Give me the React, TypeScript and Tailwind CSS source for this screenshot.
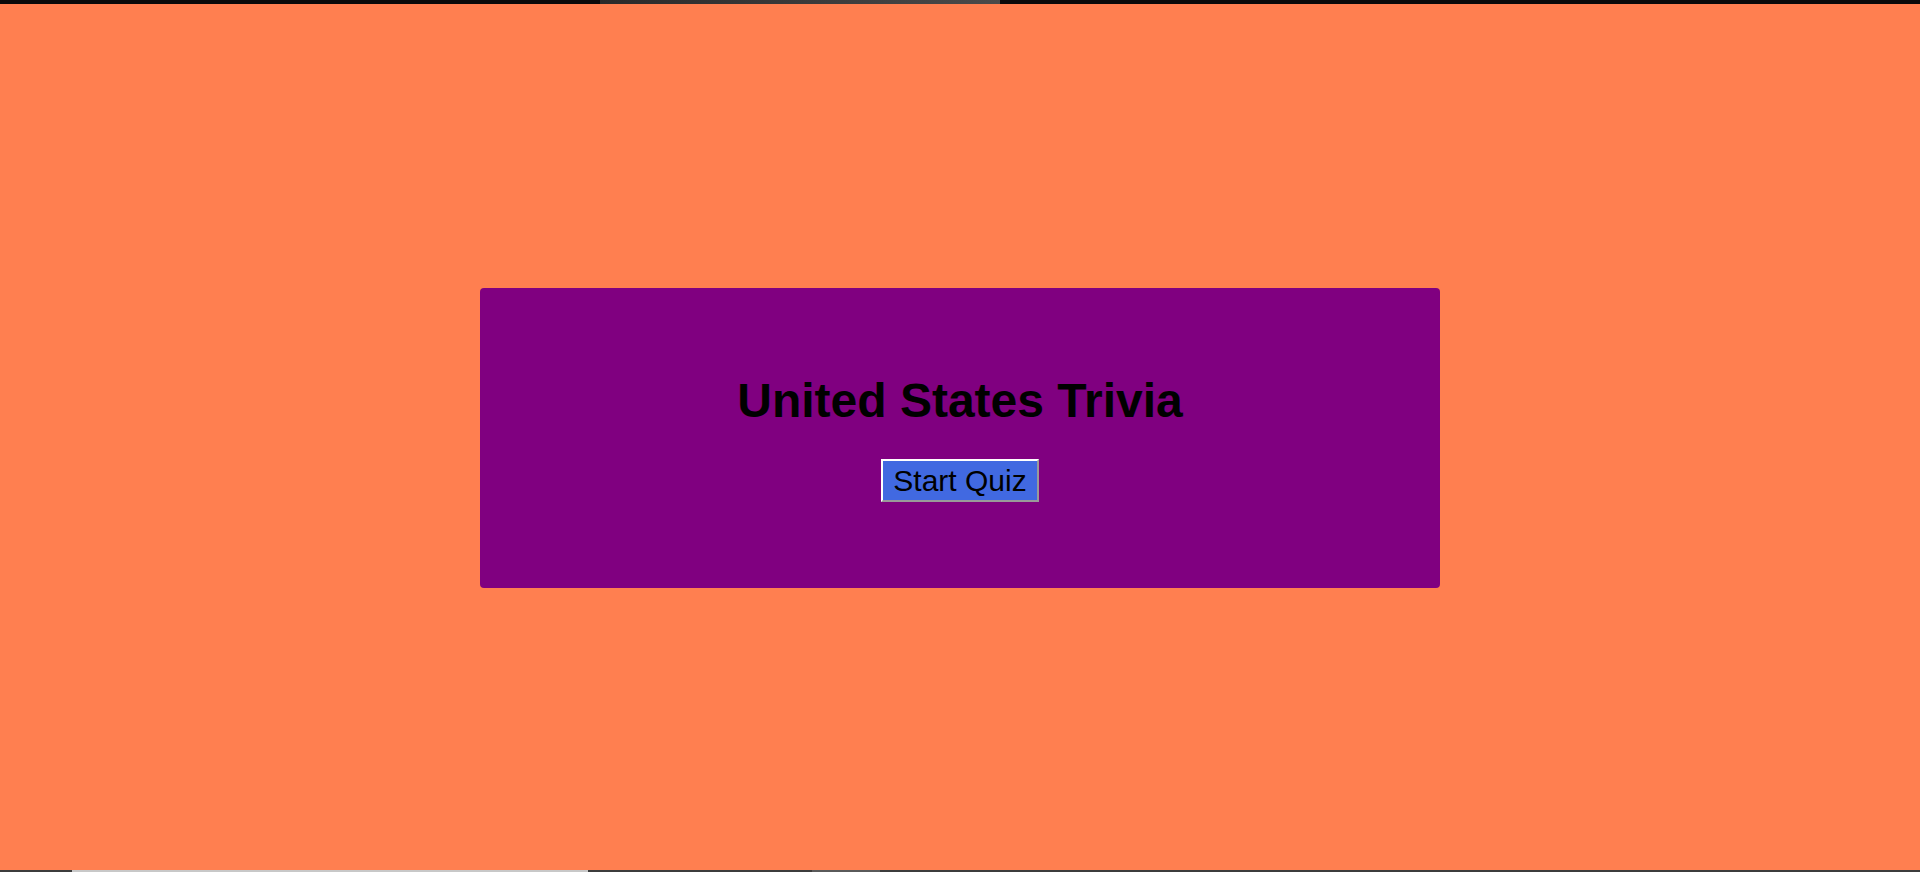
export default function App() {
  return (
    <div className="flex h-[872px] w-full flex-col bg-[#ff7f50] font-['Liberation_Sans',Arial,sans-serif]">
      {/* browser chrome strip on top */}
      <div className="flex h-[4px] w-full bg-[#0a0a0a]">
        <div className="ml-[600px] h-full w-[400px] bg-gradient-to-r from-[#2a2a2a] to-[#4a4a4a]" />
      </div>

      <div className="flex flex-1 items-center justify-center pt-[2px]">
        <div className="flex h-[300px] w-[960px] flex-col items-center justify-center rounded-[4px] bg-[#800080]">
          <h1 className="mb-[31px] text-[48px] font-bold leading-[54px] text-black">
            United States Trivia
          </h1>
          <button className="h-[43px] border-2 border-t-white border-l-white border-r-[#9a9a9a] border-b-[#9a9a9a] bg-[#4169e1] px-[10px] text-[30px] leading-[35px] text-black">
            Start Quiz
          </button>
        </div>
      </div>

      {/* scrollbar strip on bottom */}
      <div className="flex h-[2px] w-full bg-[#3c3c3c]">
        <div className="ml-[72px] h-full w-[516px] bg-[#c8c8c8]" />
        <div className="ml-[224px] h-full w-[68px] bg-[#5a5a5a]" />
      </div>
    </div>
  );
}
